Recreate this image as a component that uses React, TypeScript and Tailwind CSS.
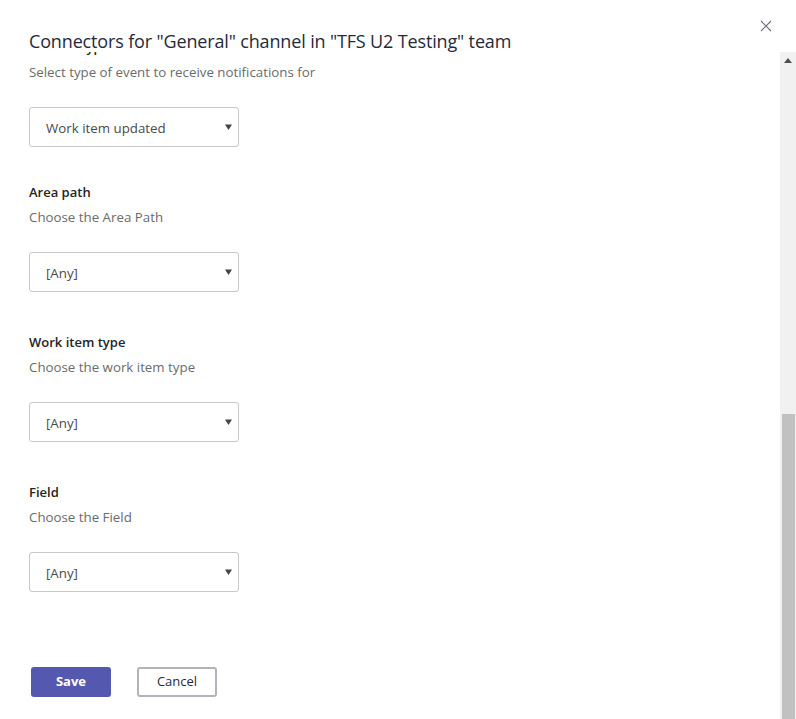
import React from "react";

const sections = [
  { label: "Area path", hint: "Choose the Area Path", value: "[Any]" },
  { label: "Work item type", hint: "Choose the work item type", value: "[Any]" },
  { label: "Field", hint: "Choose the Field", value: "[Any]" },
];

function Caret() {
  return (
    <svg width="7" height="6" viewBox="0 0 7 6" className="shrink-0">
      <path d="M0 0.5h7L3.5 6z" fill="#444444" />
    </svg>
  );
}

function SelectBox({ value }: { value: string }) {
  return (
    <div className="w-[210px] h-[40px] border border-[#c8c8c8] rounded-[3px] flex items-center justify-between pl-[16px] pr-[6px] text-[13.3px] text-[#4a4a4a]">
      <span className="pt-[3px]">{value}</span>
      <Caret />
    </div>
  );
}

export default function App() {
  return (
    <div
      className="w-[796px] h-[719px] bg-white flex flex-col overflow-hidden relative"
      style={{ fontFamily: '"Open Sans", "Noto Sans", sans-serif' }}
    >
      {/* header */}
      <div className="h-[52px] shrink-0 pl-[29px] pt-[30px] flex">
        <h1 className="text-[18px] leading-[22px] text-[#252a3b] tracking-[-0.15px]">
          Connectors for "General" channel in "TFS U2 Testing" team
        </h1>
      </div>
      <button className="absolute top-[20px] left-[760px] w-[12px] h-[12px] flex items-center justify-center">
        <svg width="12" height="12" viewBox="0 0 12 12">
          <path d="M1 1l10 10M11 1L1 11" stroke="#6b6d7e" strokeWidth="1.1" />
        </svg>
      </button>

      {/* scroll area */}
      <div className="flex flex-1 min-h-0">
        <div className="flex-1 overflow-hidden pl-[29px]">
          <div className="-mt-[15px] flex flex-col">
            <div className="pl-[14px] text-[13px] leading-[20px] font-semibold text-[#252423]">Event type</div>
            <div className="mt-[5px] text-[13.3px] leading-[20px] text-[#6b6b6b]">
              Select type of event to receive notifications for
            </div>
            <div className="mt-[25px]">
              <SelectBox value="Work item updated" />
            </div>
            {sections.map((s, i) => (
              <div key={s.label} className={i === 0 ? "flex flex-col mt-[35px]" : "flex flex-col mt-[40px]"}>
                <div className="text-[13px] leading-[20px] font-semibold text-[#252423]">{s.label}</div>
                <div className="mt-[5px] text-[13.3px] leading-[20px] text-[#6b6b6b]">{s.hint}</div>
                <div className="mt-[25px]">
                  <SelectBox value={s.value} />
                </div>
              </div>
            ))}
            <div className="mt-[75px] flex gap-[26px] ml-[2px]">
              <button className="w-[80px] h-[30px] rounded-[3px] bg-[#5558af] text-white text-[13px] font-bold">
                Save
              </button>
              <button className="w-[80px] h-[30px] rounded-[3px] border-2 border-[#b3b3bb] text-[#252a3b] text-[13px]">
                Cancel
              </button>
            </div>
          </div>
        </div>

        {/* scrollbar */}
        <div className="w-[16px] shrink-0 bg-[#f1f1f1] flex flex-col">
          <div className="h-[17px] flex items-center justify-center">
            <svg width="8" height="5" viewBox="0 0 8 5">
              <path d="M0 5h8L4 0z" fill="#505050" />
            </svg>
          </div>
          <div className="flex-1" />
          <div className="h-[305px] ml-[2px] mr-[1px] bg-[#c1c1c1]" />
        </div>
      </div>
    </div>
  );
}
